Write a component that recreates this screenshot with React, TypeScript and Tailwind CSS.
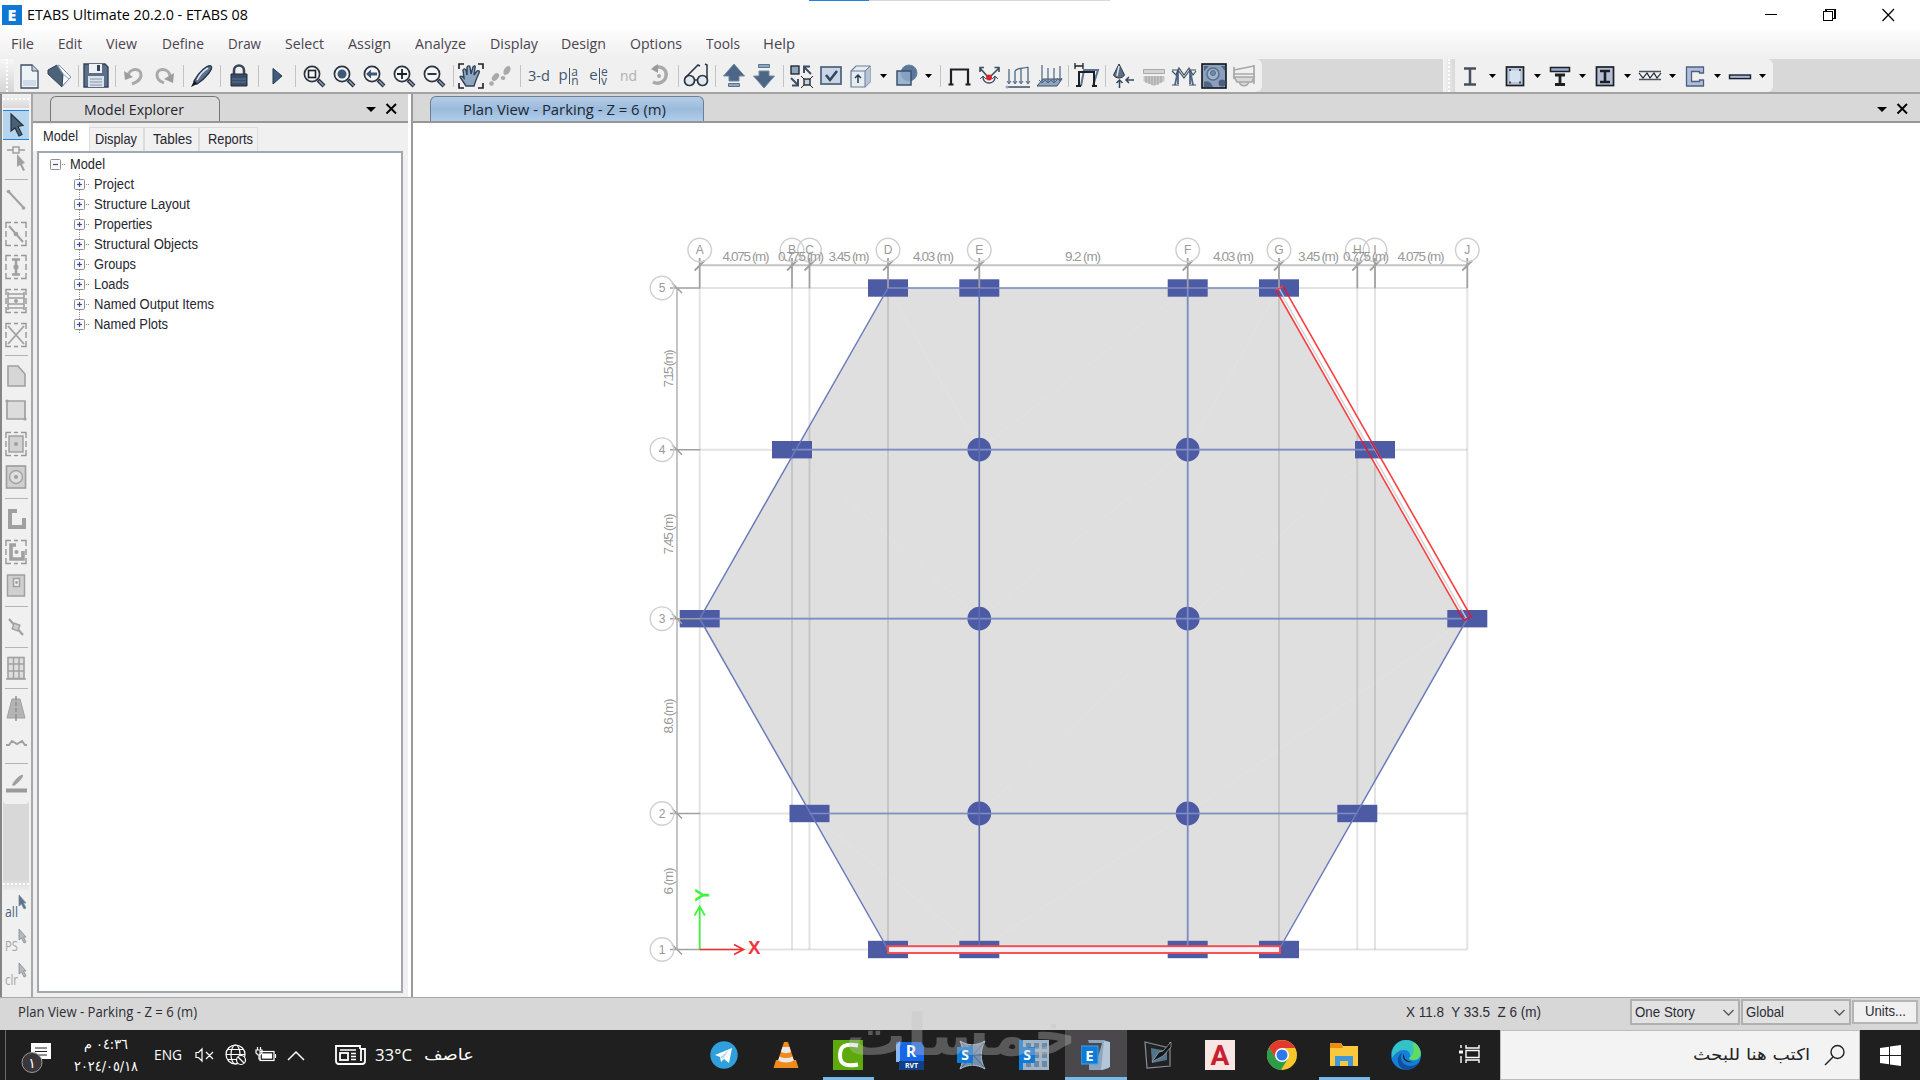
import { useLayoutEffect, useRef, useState, type ReactNode } from "react";

/* Squeezes or stretches a run of text so it occupies exactly `w` pixels. */
function Fit({ w, children, className = "" }: { w: number; children: ReactNode; className?: string }) {
  const ref = useRef<HTMLSpanElement>(null);
  const [k, setK] = useState(1);
  useLayoutEffect(() => {
    if (ref.current && ref.current.offsetWidth) setK(w / ref.current.getBoundingClientRect().width);
  }, [w]);
  return (
    <span className={`inline-block shrink-0 whitespace-nowrap ${className}`} style={{ width: w }}>
      <span ref={ref} dir="auto" className="inline-block origin-left" style={{ transform: `scaleX(${k})` }}>
        {children}
      </span>
    </span>
  );
}

function Ic({ children, s = 28 }: { children: ReactNode; s?: number }) {
  return (
    <svg width={s} height={s} viewBox="0 0 28 28" fill="none" className="shrink-0 overflow-visible">
      {children}
    </svg>
  );
}

const N = "#3d4f63";
const B = "#8fa6c0";
const G = "#a9a9a9";
const K = "#1c1f24";

function Cell({ children }: { children: ReactNode }) {
  return <div className="flex h-full w-[30px] shrink-0 items-center justify-center">{children}</div>;
}
function Sep() {
  return (
    <div className="flex h-full w-[7.5px] shrink-0 items-center justify-center pl-[2px]">
      <div className="h-[22px] w-px bg-[#c4c4c4]" />
    </div>
  );
}
function Drop() {
  return (
    <div className="flex h-full w-[15px] shrink-0 items-center justify-center">
      <svg width="7" height="4" viewBox="0 0 7 4">
        <path d="M0 0h7L3.500 4z" fill="#000" />
      </svg>
    </div>
  );
}

function Zoom({ children }: { children: ReactNode }) {
  return (
    <Ic>
      <path d="M18 18l6 6" stroke="#2b3440" strokeWidth="4" />
      <path d="M19 19l4.500 4.500" stroke={B} strokeWidth="1.400" />
      <circle cx="12" cy="12" r="7.600" fill="#f4f6f8" stroke="#2b3440" strokeWidth="1.700" />
      {children}
    </Ic>
  );
}

/* "p|an" and "e|ev": large letter, bar, then two small stacked letters. */
function Stacked({ a, t, b }: { a: string; t: string; b: string }) {
  return (
    <div className="flex items-center font-['Open_Sans'] text-[15px] font-medium text-[#42566c]">
      <span className="mb-[3px]">{a}</span>
      <span className="mx-[1px] h-[16px] w-[1.5px] bg-[#42566c]" />
      <span className="flex flex-col text-[12px] leading-[9px]">
        <span>{t}</span>
        <span>{b}</span>
      </span>
    </div>
  );
}

const menus: [string, number, string][] = [
  ["File", 23, "ml-[11px]"],
  ["Edit", 24, "ml-[24px]"],
  ["View", 31, "ml-[24px]"],
  ["Define", 42, "ml-[25px]"],
  ["Draw", 33, "ml-[24px]"],
  ["Select", 39, "ml-[24px]"],
  ["Assign", 43, "ml-[24px]"],
  ["Analyze", 51, "ml-[24px]"],
  ["Display", 48, "ml-[24px]"],
  ["Design", 45, "ml-[23px]"],
  ["Options", 52, "ml-[24px]"],
  ["Tools", 34, "ml-[24px]"],
  ["Help", 32, "ml-[23px]"],
];

function Toolbar() {
  return (
    <div className="flex h-[33px] bg-[#d8d8d8]">
      <div className="flex h-full w-[1262px] items-center rounded-r-md bg-[#f0f0f0]">
        <div className="flex h-full w-[13.5px] justify-center bg-gradient-to-b from-[#f7f7f7] to-[#d6d6d6]">
          <div className="h-full w-0 border-l-2 border-dotted border-white" />
        </div>
        <Cell>
          <Ic>
            <path d="M6 3h11l6 6v17H6z" fill="#eef3f8" stroke={N} strokeWidth="1.300" />
            <path d="M8 18h13v6H8z" fill="#cfdbe8" />
            <path d="M17 3v6h6" fill="#c4d3e2" stroke={N} />
          </Ic>
        </Cell>
        <Cell>
          <Ic>
            <path d="M10 5l4-2 12 12-9 9z" fill="#f7fafc" stroke="#7f93a8" />
            <path d="M3 8l9-5 6 9-1 13L3 12z" fill="#4d6178" stroke="#314254" />
            <path d="M12 3l6 9 6 5-7 8" stroke={B} />
          </Ic>
        </Cell>
        <Sep />
        <Cell>
          <Ic>
            <path d="M2 2h21l3 3v20H2z" fill="#5a6f88" stroke="#33435a" strokeWidth="1.400" />
            <rect x="7" y="2" width="13" height="9" fill="#eef2f6" />
            <rect x="15" y="3" width="3" height="6" fill="#33435a" />
            <rect x="6" y="14" width="16" height="11" fill="#d9e1ea" />
            <path d="M8 17h12M8 20h12M8 23h12" stroke="#8496aa" />
          </Ic>
        </Cell>
        <Sep />
        <Cell>
          <Ic>
            <path d="M8 14c1-8 13-9 13-1 0 5-4 7-9 9" stroke={G} strokeWidth="3" />
            <path d="M4 9l1 9 8-3z" fill="#9c9c9c" />
          </Ic>
        </Cell>
        <Cell>
          <Ic>
            <path d="M20 14c-1-8-13-9-13-1 0 5 3 6 7 8" stroke={G} strokeWidth="3" />
            <path d="M24 11l-1 10-9-4z" fill="#9c9c9c" />
          </Ic>
        </Cell>
        <Sep />
        <Cell>
          <Ic>
            <path d="M7 19C12 10 21 2 24 4s-5 12-14 18z" fill="#5a7190" stroke="#29384a" strokeWidth="1.500" />
            <path d="M21 6c-5 3-9 8-11 12" stroke="#dbe5ef" strokeWidth="1.500" />
            <path d="M4 25l3-6 3 3z" fill="#111" />
          </Ic>
        </Cell>
        <Sep />
        <Cell>
          <Ic>
            <path d="M9 13V8.500a5 5 0 0 1 10 0V13" stroke="#3c4654" strokeWidth="2.600" />
            <path d="M6 12h16v12H6z" fill="#3a4d66" stroke="#1f2a3a" />
            <path d="M7 17h14M7 20h14" stroke="#5d7596" />
          </Ic>
        </Cell>
        <Sep />
        <Cell>
          <Ic>
            <path d="M11 6.500l9 7.500-9 8z" fill="#3f5d80" stroke="#24364a" />
          </Ic>
        </Cell>
        <Sep />
        <Cell>
          <Zoom>
            <rect x="8.500" y="8.500" width="7" height="7" stroke={K} strokeWidth="1.600" />
          </Zoom>
        </Cell>
        <Cell>
          <Zoom>
            <circle cx="12" cy="12" r="4.500" fill="#3e5877" />
          </Zoom>
        </Cell>
        <Cell>
          <Zoom>
            <path d="M6 12l5-4.500v3h6v3h-6v3z" fill="#3e5877" />
          </Zoom>
        </Cell>
        <Cell>
          <Zoom>
            <path d="M7 12h10M12 7v10" stroke={K} strokeWidth="1.800" />
          </Zoom>
        </Cell>
        <Cell>
          <Zoom>
            <path d="M7.500 12h9" stroke={K} strokeWidth="1.800" />
          </Zoom>
        </Cell>
        <Sep />
        <Cell>
          <Ic>
            <path d="M2 7V2h5M21 2h5v5M26 21v5h-5M7 26H2v-5" stroke={K} strokeWidth="1.600" />
            <path
              d="M9 24l-6-9c1-2 3 0 4 1L6 8c1-2 2-1 3 0l1 5V5c1-2 3-1 3 0l1 7 2-7c1-2 3-1 2 1l-1 7 3-4c2-1 3 0 2 2l-3 7-2 6z"
              fill={B}
              stroke="#2f4258"
              strokeWidth="1.400"
            />
          </Ic>
        </Cell>
        <Cell>
          <Ic>
            <g fill={G}>
              <ellipse cx="20" cy="8.500" rx="3" ry="5" transform="rotate(30 20 8.500)" />
              <ellipse cx="16" cy="16" rx="2.300" ry="2" />
              <ellipse cx="8.500" cy="15" rx="2.800" ry="4.500" transform="rotate(40 8.500 15)" />
              <circle cx="4.500" cy="21.500" r="2.300" />
            </g>
          </Ic>
        </Cell>
        <Sep />
        <Cell>
          <Fit w={22} className="font-['Open_Sans'] text-[15px] font-medium text-[#42566c]">3-d</Fit>
        </Cell>
        <Cell>
          <Stacked a="p" t="a" b="n" />
        </Cell>
        <Cell>
          <Stacked a="e" t="e" b="v" />
        </Cell>
        <Cell>
          <Fit w={17} className="font-['Open_Sans'] text-[15px] text-[#b0b0b0]">nd</Fit>
        </Cell>
        <Cell>
          <Ic>
            <path d="M9 6c8-3 13 2 12 8s-8 9-13 6" stroke={G} strokeWidth="3.400" />
            <path d="M13 2v9L6 7z" fill="#9a9a9a" />
            <circle cx="14" cy="14" r="2" fill={G} />
          </Ic>
        </Cell>
        <Sep />
        <Cell>
          <Ic>
            <circle cx="7.500" cy="18.500" r="5" fill="#e2e9f1" stroke="#2a3542" strokeWidth="1.700" />
            <circle cx="20.500" cy="18.500" r="5" fill="#e2e9f1" stroke="#2a3542" strokeWidth="1.700" />
            <path d="M12 18h4M3 16L16 3l2 1M25 16V3l-2-1" stroke="#2a3542" strokeWidth="1.500" />
          </Ic>
        </Cell>
        <Sep />
        <Cell>
          <Ic>
            <path d="M14 2l10.500 12H19v5H9v-5H3.500z" fill="#4b6785" stroke="#71899f" />
            <path d="M8.500 21.500h11v3h-11z" fill={B} stroke="#5b7590" />
          </Ic>
        </Cell>
        <Cell>
          <Ic>
            <path d="M14 26L3.500 14H9V9h10v5h5.500z" fill="#4b6785" stroke="#71899f" />
            <path d="M8.500 2.500h11v3h-11z" fill={B} stroke="#5b7590" />
          </Ic>
        </Cell>
        <Sep />
        <Cell>
          <Ic>
            <rect x="4" y="4" width="8" height="8" fill={B} stroke={K} strokeWidth="1.300" />
            <path d="M24 12l-7-7m0 6V4.500h6" stroke={N} strokeWidth="2" />
            <path d="M4 16l7 7m0-6v6.500H5" stroke={N} strokeWidth="2" />
            <rect x="17" y="17" width="6" height="6" fill="#c6d2df" stroke={K} strokeWidth="1.300" />
            <path d="M14 14l3 3M26 14l-3 3M14 26l3-3M26 26l-3-3" stroke={K} />
          </Ic>
        </Cell>
        <Cell>
          <Ic>
            <rect x="4" y="5" width="20" height="17" fill="#c8d6e6" stroke="#53687f" strokeWidth="1.800" />
            <path d="M9 13l4 5 7-9" stroke="#33475e" strokeWidth="2.600" />
          </Ic>
        </Cell>
        <Cell>
          <Ic>
            <path d="M4 9l5-5h14v16l-5 5H4z" fill="#e6ecf3" stroke="#6c7f94" strokeWidth="1.200" />
            <path d="M18 9l5-5v16l-5 5z" fill="#b6c5d5" />
            <path d="M4 9h14v16M18 9l5-5" stroke="#6c7f94" />
            <path d="M11 21v-8m-3 3l3-3 3 3" stroke="#2b3b4e" strokeWidth="1.500" />
          </Ic>
        </Cell>
        <Drop />
        <Cell>
          <Ic>
            <circle cx="17" cy="11" r="8" fill="#5b779b" stroke="#6c86a6" />
            <rect x="5" y="9" width="14" height="14" fill="#8ea9c7" fillOpacity=".85" stroke="#3a5270" strokeWidth="1.500" />
          </Ic>
        </Cell>
        <Drop />
        <Sep />
        <Cell>
          <Ic>
            <path d="M6 22V7.500h17V22" stroke={K} strokeWidth="2.200" />
            <path d="M3.500 22.500h5M20.500 22.500h5" stroke={K} strokeWidth="2" />
          </Ic>
        </Cell>
        <Cell>
          <Ic>
            <path d="M12 14L5 6m0 4V5.500h4M16 14l8-8m-4.500-.5H24V10" stroke={N} strokeWidth="1.600" />
            <path d="M8 15c0 8 12 8 12 0" stroke={N} strokeWidth="1.500" />
            <path d="M5 17l3-3 3 3M17 17l3-3 3 3" stroke={N} />
            <circle cx="14" cy="15.500" r="3" fill="#d4242c" />
          </Ic>
        </Cell>
        <Cell>
          <Ic>
            <path d="M4 7v14M10 9v12M16 6v15M23 5v16M10 9c3-4 8-2 13-4" stroke="#4d6785" strokeWidth="1.300" />
            <path d="M2 19l2 3 2-3M8 19l2 3 2-3M14 19l2 3 2-3M21 19l2 3 2-3" stroke="#4d6785" />
            <path d="M2 25h23" stroke={N} strokeWidth="1.500" />
            <circle cx="2" cy="25" r="1.500" fill={B} />
          </Ic>
        </Cell>
        <Cell>
          <Ic>
            <path d="M2 24l6-7h19l-5 7z" fill={B} stroke={N} />
            <path d="M7 3v17M13 6v14M19 6v14M25 4v14" stroke="#4d6785" strokeWidth="1.200" />
            <path d="M4 18l3 3 3-3M10 18l3 3 3-3M16 18l3 3 3-3M22 16l3 3 2-3" stroke="#4d6785" />
          </Ic>
        </Cell>
        <Sep />
        <Cell>
          <Ic>
            <path d="M9 24L12 8h14l-5 16" stroke="#5a7695" strokeWidth="2" />
            <path d="M7 24V10h15v14M4 24h5M20 24h5" stroke={K} strokeWidth="2" />
            <path d="M3 1v6M11 1v6M3 4h8" stroke={K} strokeWidth="1.300" />
          </Ic>
        </Cell>
        <Sep />
        <Cell>
          <Ic>
            <path d="M9 2L3.500 13c2 4 9 4 11 0z" fill="#5c6f84" stroke="#28333f" />
            <path d="M9 4l-2 10" stroke="#dce4ec" strokeWidth="1.500" />
            <path d="M9.500 26v-8m-3 3l3-3 3 3M24 18h-8m3-3l-3 3 3 3" stroke="#33475e" strokeWidth="1.500" />
          </Ic>
        </Cell>
        <Cell>
          <Ic>
            <path d="M3.500 7.500h21v4h-21z" fill="#d4d4d4" stroke={G} />
            <path d="M3.500 14h21v5L14 24 3.500 19z" fill="#c6c6c6" />
            <path d="M6 14v7M9 14v8M12 14v9M15 14v9M18 14v9M21 14v7" stroke="#a2a2a2" />
          </Ic>
        </Cell>
        <Cell>
          <Ic>
            <path d="M5 23l3-15M20 8l3 15M8 22V9M20 22V9" stroke="#4d6785" strokeWidth="1.800" />
            <path d="M2 8h6l6 8 6-8h6M2 9l4 4 3-7 5 7 5-7 4 7 3-4M2 23h7M19 23h7" stroke={N} strokeWidth="1.200" />
          </Ic>
        </Cell>
        <Cell>
          <Ic>
            <rect x="2" y="2" width="24" height="24" fill="#8aa0bc" stroke="#10141a" strokeWidth="1.600" />
            <circle cx="13" cy="12" r="6" fill="#9fb3ca" stroke="#566f8e" strokeWidth="1.500" />
            <circle cx="13" cy="11" r="2.500" fill="#7189a6" stroke="#566f8e" />
            <circle cx="22" cy="21" r="3.500" fill="#4b607b" />
            <path d="M4 4h5L4 9zM21 4h4v5zM4 20c4-2 7 0 9 5H4z" fill="#4f6580" />
          </Ic>
        </Cell>
        <Cell>
          <Ic>
            <path d="M4 5v12M24 3v19M4 8l20-4M3 12h22M4 15h20l-2 5H7zM9 20c2 5 8 5 10 0" stroke="#a8a8a8" strokeWidth="1.700" fill="#d8d8d8" />
          </Ic>
        </Cell>
      </div>
      <div className="ml-[181px] flex h-full w-[330px] items-center rounded-r-md bg-[#f0f0f0]">
        <div className="flex h-full w-[12px] justify-center bg-gradient-to-r from-[#f4f4f4] to-[#d8d8d8]">
          <div className="h-full border-l-2 border-dotted border-white" />
        </div>
        <Cell>
          <Ic>
            <path d="M8 6.500h12M8 22.500h12M14 6v16" stroke="#45505d" strokeWidth="2.500" />
          </Ic>
        </Cell>
        <Drop />
        <Cell>
          <Ic>
            <rect x="5.500" y="5" width="17" height="18.500" fill="#b9c6da" stroke={K} strokeWidth="1.700" />
            <rect x="9" y="8.500" width="10" height="11.500" fill="#d5e1ee" />
            <path d="M8 8h2M18 8h2M8 20.500h2M18 20.500h2" stroke={N} strokeWidth="2" />
          </Ic>
        </Cell>
        <Drop />
        <Cell>
          <Ic>
            <rect x="4.500" y="5.500" width="19" height="4" fill="#9cabd0" stroke={K} strokeWidth="1.500" />
            <path d="M9 13h10M9 22.500h10M14 12v10" stroke={K} strokeWidth="2.800" />
          </Ic>
        </Cell>
        <Drop />
        <Cell>
          <Ic>
            <rect x="5.500" y="5" width="17" height="18.500" fill="#b4bfd6" stroke={K} strokeWidth="1.700" />
            <path d="M9 9h10M9 20h10M14 9v11" stroke={K} strokeWidth="2.600" />
          </Ic>
        </Cell>
        <Drop />
        <Cell>
          <Ic>
            <path d="M3 9.500h22M3 17.500h22" stroke="#4a5468" strokeWidth="1.600" />
            <path d="M3 11l4 5 4-5 3 5 4-5 3 5 4-5" stroke={K} strokeWidth="1.200" />
          </Ic>
        </Cell>
        <Drop />
        <Cell>
          <Ic>
            <path d="M5.500 5h17v6h-4V9.500h-8v10h8V18h4v6h-17z" fill="#b2bddb" stroke="#4c6180" strokeWidth="1.300" />
          </Ic>
        </Cell>
        <Drop />
        <Cell>
          <Ic>
            <rect x="3.500" y="13" width="21" height="3.600" fill="#a6b3da" stroke={K} strokeWidth="1.400" />
          </Ic>
        </Cell>
        <Drop />
      </div>
    </div>
  );
}

function VCell({ children, on = false }: { children: ReactNode; on?: boolean }) {
  return (
    <div className="flex h-[33.8px] w-full shrink-0 items-center justify-center">
      {on ? (
        <div className="flex h-[30px] w-full items-center justify-center border-y border-[#1f83dc] bg-[#b5d5ee]">{children}</div>
      ) : (
        children
      )}
    </div>
  );
}
function VSep() {
  return (
    <div className="flex h-[7.3px] w-full shrink-0 items-center justify-center">
      <div className="h-px w-[23px] bg-[#b5b5b5]" />
    </div>
  );
}
const dashBox = (
  <path d="M4 8V2.500h5M12 2.500h4M19 2.500h5V8M24 11v6M24 20v5.500h-5M16 25.500h-4M9 25.500H4V20M4 17v-6" stroke="#979797" strokeWidth="1.400" />
);

function SideTools() {
  const g = "#a0a0a0";
  return (
    <div className="flex w-[31px] shrink-0 flex-col border-l-2 border-[#858585] bg-[#f0f0f0] pr-[2px] pl-[1px]">
      <div className="flex h-full flex-col bg-[#d8d8d8]">
        <div className="flex h-[710px] shrink-0 flex-col rounded-b bg-[#f0f0f0]">
          <div className="h-[14px] shrink-0 bg-gradient-to-b from-[#f2f2f2] to-[#d9d9d9] pt-[4px]">
            <div className="border-t-2 border-dotted border-white" />
          </div>
          <VCell on>
            <Ic>
              <path d="M9 3v17l4-3 4 8 3-1.500-4-8 5-1z" fill="#4a5f78" stroke="#26333f" strokeWidth="1.200" />
            </Ic>
          </VCell>
          <VCell>
            <Ic>
              <path d="M5 5h18" stroke={g} strokeWidth="1.600" />
              <rect x="11" y="2" width="6" height="6" fill="#f0f0f0" stroke={g} strokeWidth="1.500" />
              <path d="M15 9v13l3-2 3 6 2-1-3-6 3-1z" fill={g} />
            </Ic>
          </VCell>
          <VSep />
          <VCell>
            <Ic>
              <path d="M7 6l14 15" stroke={g} strokeWidth="2" />
              <circle cx="6.500" cy="5.500" r="1.800" fill={g} />
              <circle cx="21.500" cy="22" r="1.800" fill={g} />
            </Ic>
          </VCell>
          <VCell>
            <Ic>
              {dashBox}
              <path d="M7 6l14 16" stroke={g} strokeWidth="2" />
              <circle cx="14" cy="14" r="2.300" fill={g} />
            </Ic>
          </VCell>
          <VCell>
            <Ic>
              {dashBox}
              <path d="M10 6.500h8M10 21.500h8M14 6v15" stroke={g} strokeWidth="2.500" />
              <circle cx="14" cy="14" r="2.600" fill={g} />
            </Ic>
          </VCell>
          <VCell>
            <Ic>
              {dashBox}
              <path d="M6 5v18M22 5v18M6 7h16M6 11h16M6 17h16M6 21h16" stroke={g} strokeWidth="1.600" />
              <circle cx="14" cy="14" r="2" fill={g} />
            </Ic>
          </VCell>
          <VCell>
            <Ic>
              {dashBox}
              <path d="M6 5l16 18M22 5L6 23" stroke={g} strokeWidth="1.800" />
            </Ic>
          </VCell>
          <VSep />
          <VCell>
            <Ic>
              <path d="M6 4h10l7 8v12H6z" fill="#d6d6d6" stroke={g} strokeWidth="1.600" />
            </Ic>
          </VCell>
          <VCell>
            <Ic>
              <path d="M5 5h18v18H5z" fill="#dcdcdc" stroke={g} strokeWidth="1.700" />
              <circle cx="5" cy="5" r="1.600" fill={g} />
              <circle cx="23" cy="23" r="1.600" fill={g} />
            </Ic>
          </VCell>
          <VCell>
            <Ic>
              {dashBox}
              <rect x="7" y="6" width="14" height="16" fill="#d2d2d2" stroke={g} strokeWidth="1.500" />
              <circle cx="14" cy="14" r="2" fill={g} />
            </Ic>
          </VCell>
          <VCell>
            <Ic>
              <rect x="4.500" y="3" width="19" height="22" fill="#cfcfcf" stroke={g} strokeWidth="1.700" />
              <circle cx="14" cy="14" r="6.500" fill="#dedede" stroke={g} strokeWidth="1.400" />
              <circle cx="14" cy="14" r="2" fill={g} />
            </Ic>
          </VCell>
          <VSep />
          <VCell>
            <Ic>
              <path d="M15 6H8v16h14v-9" stroke={g} strokeWidth="4" />
            </Ic>
          </VCell>
          <VCell>
            <Ic>
              {dashBox}
              <path d="M14 7H9v14h12v-8" stroke={g} strokeWidth="3.600" />
              <circle cx="14.500" cy="14" r="2" fill={g} />
            </Ic>
          </VCell>
          <VCell>
            <Ic>
              <rect x="5.500" y="3" width="17" height="21" fill="#cfcfcf" stroke={g} strokeWidth="1.500" />
              <rect x="11.500" y="6.500" width="6" height="8" fill="#eee" stroke={g} strokeWidth="1.500" />
              <circle cx="14.500" cy="10.500" r="1.400" fill={g} />
            </Ic>
          </VCell>
          <VSep />
          <VCell>
            <Ic>
              <path d="M7 6l14 16" stroke={g} strokeWidth="2.200" />
              <rect x="11" y="11" width="6" height="6" transform="rotate(20 14 14)" fill="#ccc" stroke={g} strokeWidth="1.400" />
            </Ic>
          </VCell>
          <VSep />
          <VCell>
            <Ic>
              <rect x="6" y="3.500" width="16" height="21" fill="#dedede" stroke={g} strokeWidth="1.600" />
              <path d="M11.500 3v21M17 3v21M6 10h16M6 17h16M4 25h20" stroke={g} strokeWidth="1.400" />
            </Ic>
          </VCell>
          <VSep />
          <VCell>
            <Ic>
              <path d="M10 4h8l5 19H5z" fill="#b4b4b4" stroke={g} />
              <path d="M14 1v4M14 7v4M14 13v4M14 19v7" stroke="#8c8c8c" strokeWidth="1.400" />
            </Ic>
          </VCell>
          <VCell>
            <Ic>
              <path d="M4 16h3l3-4 5 3 5-3 3 4h2" stroke={g} strokeWidth="2" />
            </Ic>
          </VCell>
          <VSep />
          <VCell>
            <Ic>
              <path d="M10 15c3-6 9-11 11-10 1 2-5 8-9 11z" fill={g} />
              <path d="M4 20.500h21" stroke="#9a9a9a" strokeWidth="4" />
            </Ic>
          </VCell>
        </div>
        <div className="grow" />
        <div className="flex h-[117px] shrink-0 flex-col bg-[#f0f0f0] font-['Open_Sans'] text-[14px] leading-[14px]">
          <div className="h-[10px] shrink-0 bg-gradient-to-b from-[#d9d9d9] to-[#ececec] pt-[3px]">
            <div className="border-t-2 border-dotted border-white" />
          </div>
          {[
            ["all", "text-[#4e6480]", "#5b7490"],
            ["PS", "text-[#a5a5a5]", "#b9b9b9"],
            ["clr", "text-[#a5a5a5]", "#b9b9b9"],
          ].map(([t, c, f]) => (
            <div key={t} className="flex h-[34px] w-full shrink-0 items-end pb-[5px] pl-[2px]">
              <Fit w={13} className={c}>{t}</Fit>
              <svg width="9" height="15" viewBox="0 0 9 15" className="mb-[9px]">
                <path d="M1 0v11l2.500-2L6 14l2-1-2.500-5H8z" fill={f} stroke="#7d8a98" strokeWidth=".8" />
              </svg>
            </div>
          ))}
        </div>
      </div>
    </div>
  );
}

const tree: [string, number][] = [
  ["Project", 40],
  ["Structure Layout", 96],
  ["Properties", 58],
  ["Structural Objects", 104],
  ["Groups", 42],
  ["Loads", 35],
  ["Named Output Items", 120],
  ["Named Plots", 74],
];

function Box({ plus = false }: { plus?: boolean }) {
  return (
    <svg width="18" height="20" viewBox="0 0 18 20" className="shrink-0">
      {plus && <path d="M5.500 0v20" stroke="#8a8a8a" strokeDasharray="1 1" />}
      <rect x=".5" y="5.500" width="10" height="10" rx="1" fill="#fafafa" stroke="#8f8f8f" />
      <path d="M3 10.500h5" stroke="#3b4ea0" strokeWidth="1.200" />
      {plus && <path d="M5.500 8v5" stroke="#3b4ea0" strokeWidth="1.200" />}
      <path d="M12 10.500h4" stroke="#8a8a8a" strokeDasharray="1 1" />
    </svg>
  );
}

function PaneButtons() {
  return (
    <svg width="32" height="12" viewBox="0 0 32 12">
      <path d="M0 4h10L5 9z" fill="#000" />
      <path d="M20.500 1l9.500 9.500M30 1l-9.500 9.500" stroke="#000" strokeWidth="1.900" />
    </svg>
  );
}

function Explorer() {
  const tab = "flex items-center border border-[#dcdcdc] border-b-0 bg-[#f1f1f1] text-[#26262e]";
  return (
    <div className="flex w-[377px] shrink-0 flex-col border-l-2 border-[#a8a8a8] bg-[#f0f0f0] font-['Liberation_Sans'] text-[14px]">
      <div className="flex h-[29px] items-end justify-between border-b-2 border-[#979797] bg-[#d8d8d8] pr-[10px]">
        <div className="ml-[17px] flex h-[25px] w-[170px] items-center rounded-t-md border border-b-0 border-[#777] bg-[#dcdcdc] pl-[33px] font-['Open_Sans'] text-[15px] font-medium text-[#26262e]">
          <Fit w={100}>Model Explorer</Fit>
        </div>
        <div className="pb-[6px]">
          <PaneButtons />
        </div>
      </div>
      <div className="flex h-[28px] shrink-0 items-end">
        <div className="flex h-[27px] w-[56px] items-center bg-white pb-[3px] pl-[10px] text-[#26262e]">
          <Fit w={35}>Model</Fit>
        </div>
        <div className={`${tab} h-[24px] w-[55px] pl-[5px]`}>
          <Fit w={42}>Display</Fit>
        </div>
        <div className={`${tab} h-[24px] w-[55px] pl-[8px]`}>
          <Fit w={39}>Tables</Fit>
        </div>
        <div className={`${tab} h-[24px] w-[59px] pl-[8px]`}>
          <Fit w={45}>Reports</Fit>
        </div>
      </div>
      <div className="mr-[5px] ml-[4px] h-[842px] border-2 border-[#a3a8b0] bg-white pt-[1px] text-[#26262e]">
        <div className="flex h-[20px] items-center pl-[11px]">
          <Box />
          <Fit w={35} className="ml-[2px]">Model</Fit>
        </div>
        {tree.map(([t, w]) => (
          <div key={t} className="flex h-[20px] items-center pl-[35px]">
            <Box plus />
            <Fit w={w} className="ml-[2px]">{t}</Fit>
          </div>
        ))}
      </div>
    </div>
  );
}

const gx: Record<string, number> = { A: 699.7, B: 792, C: 809.5, D: 888, E: 979.3, F: 1187.7, G: 1279, H: 1357.3, I: 1375, J: 1467.3 };
const gy: Record<string, number> = { "5": 288, "4": 449.7, "3": 618.7, "2": 813.5, "1": 949.5 };
const rectCols = ["D5", "E5", "F5", "G5", "B4", "I4", "A3", "J3", "C2", "H2", "D1", "E1", "F1", "G1"];
const roundCols = ["E4", "F4", "E3", "F3", "E2", "F2"];
const dimsX: [string, number, number][] = [
  ["4.075 (m)", 746, 47],
  ["0.775 (m)", 801, 46],
  ["3.45 (m)", 849, 41],
  ["4.03 (m)", 933.5, 41],
  ["9.2 (m)", 1083, 36],
  ["4.03 (m)", 1233.5, 41],
  ["3.45 (m)", 1318.5, 41],
  ["0.775 (m)", 1366, 46],
  ["4.075 (m)", 1421, 47],
];
const dimsY: [string, number, number][] = [
  ["7.15 (m)", 368.5, 38],
  ["7.45 (m)", 534, 41],
  ["8.6 (m)", 716, 35],
  ["6 (m)", 881, 27],
];

function Plan() {
  const blue = "#4c5ba4";
  return (
    <svg width="1506" height="874" viewBox="413 123 1506 874" className="block" fontFamily="Liberation Sans, sans-serif">
      <polygon points="888,288 1279,288 1467.300,618.700 1279,949.500 888,949.500 699.700,618.700" fill="#dfdfdf" />
      <path
        d="M888 288L979.300 449.700L1187.700 288M1279 288L1187.700 449.700L979.300 618.700M1375 449.700L1187.700 618.700L979.300 813.300M1467 618.700L1187.700 813.300L979.300 949.300M809.500 813.300L979.300 949.300M792 449.700L979.300 618.700"
        fill="none"
        stroke="#e6e6e6"
        strokeWidth=".7"
        opacity=".7"
      />
      <g stroke="#000" strokeOpacity=".11" strokeWidth="2">
        {Object.values(gx).map((x) => (
          <path key={x} d={`M${x} 288V949.500`} />
        ))}
        {Object.values(gy).map((y) => (
          <path key={y} d={`M699.700 ${y}H1467.300`} />
        ))}
      </g>
      <path d="M1276 290.200l7-3.900L1471 616.500l-7 4z" fill="#fff" />
      <path d="M1278.500 289L1466.500 619" stroke="#d6d6d6" strokeWidth="1.500" />
      <g fill={blue}>
        {rectCols.map((c) => (
          <rect key={c} x={gx[c[0]] - 20} y={gy[c[1]] - 8.7} width="40" height="17.400" />
        ))}
        {roundCols.map((c) => (
          <circle key={c} cx={gx[c[0]]} cy={gy[c[1]]} r="11.900" />
        ))}
      </g>
      <g stroke="#7f8dc6" strokeWidth="1.700" fill="none">
        <path d="M888 288H1279M792 449.700H1375M699.700 618.700H1467.300M809.500 813.500H1357.300M1187.700 288V949.500" />
        <path d="M888 288L699.700 618.700L888 949.500M1279 949.500L1467.300 618.700" stroke="#6c7bba" strokeWidth="1.500" />
        <path d="M979.300 288V949.500" stroke="#5f6eb2" strokeWidth="1.500" />
      </g>
      <path d="M1370 441L1380 458.400M1279 288l5 9M1461 609l5.500 9.500" stroke="#b9c0e0" strokeWidth="1.500" />
      <path d="M1276 290.200l7-3.900L1471 616.500l-7 4z" fill="none" stroke="#fa4044" strokeWidth="1.600" />
      <path d="M1361.900 441l10 17.400M1370.500 441l10 17.400M1276 290.200l3.500 6.300M1283 286.300l5.700 10M1457.500 610l6.500 10.500 7-4-3.500-6.400" fill="none" stroke="#b22450" strokeWidth="1.500" />
      <rect x="888" y="946.200" width="392" height="6.800" fill="#f4f2f7" stroke="#f84a4e" strokeWidth="1.900" />
      <g stroke="#a0a0a0">
        <path d="M699.700 265.300H1467.300M677 288V949.500" stroke="#c4c4c4" strokeWidth="2" />
        {Object.values(gx).map((x) => (
          <path key={x} d={`M${x} 258v30M${x - 5} 270.500l10-10`} strokeWidth="1.800" />
        ))}
        {Object.values(gy).map((y) => (
          <path key={y} d={`M670 ${y}h30M672 ${y - 5}l10 10`} strokeWidth="1.600" />
        ))}
      </g>
      <g fill="none" stroke="#cfcfcf" strokeWidth="1.400">
        {Object.values(gx).map((x) => (
          <circle key={x} cx={x} cy="250" r="11.800" />
        ))}
        {Object.values(gy).map((y) => (
          <circle key={y} cx="662" cy={y} r="11.800" />
        ))}
      </g>
      <g fill="#989898" fontSize="12" textAnchor="middle">
        {Object.entries(gx).map(([k, x]) => (
          <text key={k} x={x} y="254">{k}</text>
        ))}
        {Object.entries(gy).map(([k, y]) => (
          <text key={k} x="662" y={y + 4}>{k}</text>
        ))}
        {dimsX.map(([t, x, w]) => (
          <text key={x} x={x} y="260.500" fontSize="13.500" textLength={w} lengthAdjust="spacing">{t}</text>
        ))}
        {dimsY.map(([t, y, w]) => (
          <text key={y} transform={`translate(672.500 ${y}) rotate(-90)`} fontSize="13.500" textLength={w} lengthAdjust="spacing">{t}</text>
        ))}
      </g>
      <g fill="none" strokeWidth="1.700">
        <path d="M699.700 949.500V907M694.500 915.500l5.200-9 5.200 9" stroke="#3df53d" />
        <path d="M699.700 949.500H743M734 944.500l9.500 5-9.500 5" stroke="#ee3030" />
      </g>
      <text x="748" y="954" fontSize="18.500" fontWeight="bold" fill="#f2383c" textLength="12.500" lengthAdjust="spacingAndGlyphs">X</text>
      <text transform="translate(709 895.200) rotate(-90)" textAnchor="middle" fontSize="20" fontWeight="bold" fill="#3df53d">Y</text>
    </svg>
  );
}

function View() {
  return (
    <div className="ml-[3px] flex grow flex-col border-l-2 border-[#9a9a9a] bg-white">
      <div className="flex h-[29px] items-end justify-between border-b-2 border-[#979797] bg-[#d8d8d8] pr-[11px]">
        <div className="ml-[17px] flex h-[25px] w-[274px] items-center rounded-t-md border border-b-0 border-[#6e7f92] bg-gradient-to-b from-[#b5cde6] via-[#9bbbdb] to-[#b0cceb] pl-[32px] font-['Open_Sans'] text-[15px] font-medium text-[#1d2733]">
          <Fit w={203}>Plan View - Parking - Z = 6 (m)</Fit>
        </div>
        <div className="pb-[6px]">
          <PaneButtons />
        </div>
      </div>
      <Plan />
    </div>
  );
}

function Combo({ t, w }: { t: string; w: number }) {
  return (
    <div className="flex h-[26px] w-[110px] items-center justify-between border-2 border-[#b0b0b0] bg-[#e2e2e2] pt-px pr-[4px] pl-[3px]">
      <Fit w={w}>{t}</Fit>
      <svg width="11" height="7" viewBox="0 0 11 7" fill="none">
        <path d="M.5 1l5 5 5-5" stroke="#555" strokeWidth="1.300" />
      </svg>
    </div>
  );
}

function Pinned({ children, on = "", bar = "" }: { children?: ReactNode; on?: string; bar?: string }) {
  return (
    <div className={`flex h-full w-[62px] shrink-0 flex-col items-center justify-end ${on}`}>
      <div className="flex h-[47px] items-center">{children}</div>
      <div className={`h-[3px] ${bar}`} />
    </div>
  );
}

function S30({ children }: { children: ReactNode }) {
  return (
    <svg width="30" height="30" viewBox="0 0 30 30" fill="none" fontFamily="Open Sans, sans-serif" fontWeight="bold" className="mt-[2px]">
      {children}
    </svg>
  );
}

function Taskbar() {
  return (
    <div className="relative flex h-[50px] bg-[#1f1f1f] font-['Open_Sans'] text-white">
      <div className="flex h-full w-[693px] items-center">
        <div className="ml-[5px] h-full w-px bg-[#6a6a6a]" />
        <svg width="32" height="34" viewBox="0 0 32 34" className="mt-[3px] ml-[15px]">
          <path d="M10 3h20v16H21v5l-6-5h-5z" fill="#fff" />
          <path d="M14 8h12M14 11.500h12M14 15h12" stroke="#222" strokeWidth="1.200" />
          <circle cx="11" cy="22.500" r="10" fill="#3b3639" stroke="#9a9a9a" />
          <text x="11" y="28" textAnchor="middle" fontSize="14" fill="#fff" fontFamily="DejaVu Sans">١</text>
        </svg>
        <div className="ml-[21px] flex h-full w-[64px] flex-col items-center justify-center font-['DejaVu_Sans'] text-[14px] leading-[22px]">
          <Fit w={44}>
            <span dir="rtl">٠٤:٣٦ م</span>
          </Fit>
          <Fit w={64}>٢٠٢٤/٠٥/١٨</Fit>
        </div>
        <Fit w={28} className="ml-[16px] text-[14.5px]">ENG</Fit>
        <svg width="20" height="16" viewBox="0 0 20 16" fill="none" stroke="#fff" strokeWidth="1.200" className="ml-[13px]">
          <path d="M1 5.500h2.500L7 2v12l-3.500-3.500H1zM11 5l7 7M18 5l-7 7" />
        </svg>
        <svg width="22" height="22" viewBox="0 0 22 22" fill="none" stroke="#fff" strokeWidth="1.200" className="ml-[10px]">
          <circle cx="10.500" cy="10.500" r="9.500" />
          <ellipse cx="10.500" cy="10.500" rx="4.500" ry="9.500" />
          <path d="M1 10.500h19M2.500 5.500h16M2.500 15.500h12" />
          <circle cx="16" cy="16" r="4.500" fill="#1f1f1f" />
          <path d="M13 13l6 6" />
        </svg>
        <svg width="22" height="16" viewBox="0 0 22 16" fill="none" stroke="#fff" strokeWidth="1.200" className="ml-[8px]">
          <rect x="5" y="4.500" width="14" height="9" />
          <rect x="7.500" y="7" width="9" height="4" fill="#fff" />
          <path d="M20.500 7v4M1 3h6v3l-2 2H3L1 6zM2.500 3V0M5.500 3V0M4 8v4h2" />
        </svg>
        <svg width="18" height="11" viewBox="0 0 18 11" fill="none" stroke="#fff" strokeWidth="1.500" className="ml-[10px]">
          <path d="M1 10l8-8 8 8" />
        </svg>
        <svg width="31" height="20" viewBox="0 0 31 20" fill="none" stroke="#fff" strokeWidth="1.800" className="ml-[30px]">
          <path d="M25 4V1H1v15c0 2 1 3 3 3h23c2 0 3-1 3-3V4h-4v12" />
          <rect x="5" y="8" width="8" height="7" />
          <path d="M5 5h16M16 8.500h5M16 11.500h5M16 14.500h5" strokeWidth="1.500" />
        </svg>
        <Fit w={37} className="ml-[9px] text-[17px]">33°C</Fit>
        <Fit w={50} className="ml-[12px] font-['DejaVu_Sans'] text-[16px]">عاصف</Fit>
      </div>
      <Pinned>
        <S30>
          <circle cx="15" cy="15" r="13.700" fill="#2fa0dc" />
          <path d="M6 15l17-7-3 15-5-4-3 3-1-5z" fill="#fff" />
          <path d="M11 17l9-7-6 9z" fill="#b9dcf0" />
        </S30>
      </Pinned>
      <Pinned>
        <S30>
          <path d="M5 20h20l2.500 8H2.500z" fill="#f08a1c" />
          <path d="M13 2h4l6.500 20c-3 3-14 3-17 0z" fill="#f08a1c" />
          <path d="M11.500 7h7l1.600 5c-3 1.500-7 1.500-10.200 0zM8.500 16.500c4 2 9 2 13 0l1.300 4c-4 2.500-12 2.500-15.600 0z" fill="#e9e9e9" />
        </S30>
      </Pinned>
      <Pinned bar="w-[51px] bg-[#76b9ed]">
        <S30>
          <rect width="30" height="30" fill="#5eaa0c" />
          <path d="M25 5.500C12 3 7 6 7 15s5 12 18 9.500" stroke="#fff" strokeWidth="4" />
        </S30>
      </Pinned>
      <Pinned>
        <S30>
          <path d="M1 2h25l3 4v24H4v-8H1z" fill="#1667e8" />
          <path d="M1 5l4-4v21H1z" fill="#8bb7f7" />
          <path d="M4 21h25v9H4z" fill="#123f87" />
          <text x="16" y="17" textAnchor="middle" fontSize="16" fill="#fff">R</text>
          <text x="16.500" y="28" textAnchor="middle" fontSize="7" fill="#fff">RVT</text>
        </S30>
      </Pinned>
      <Pinned>
        <S30>
          <path d="M3 1c8 5 16 5 25 0-5 9-5 19 0 28-8-5-17-5-25 0 4-9 4-19 0-28z" fill="#7790ab" stroke="#a9bccd" />
          <path d="M15 4v22M6 15h19M5 3l22 24M27 3L5 27" stroke="#506a86" />
          <rect x="0" y="7" width="16" height="16" fill="#0f7bd8" />
          <text x="8" y="20" textAnchor="middle" fontSize="14" fill="#fff">S</text>
        </S30>
      </Pinned>
      <Pinned>
        <S30>
          <rect width="30" height="30" fill="#9fb5c9" />
          <path d="M7 3h5v6H7zM15 3h5v6h-5zM23 3h5v6h-5zM15 12h5v6h-5zM23 12h5v6h-5zM7 21h5v6H7zM15 21h5v6h-5zM23 21h5v6h-5z" fill="#6f89a3" />
          <path d="M0 0h4v30H0z" fill="#0f7bd8" />
          <rect x="0" y="7" width="16" height="16" fill="#0f7bd8" />
          <text x="8" y="20" textAnchor="middle" fontSize="14" fill="#fff">S</text>
        </S30>
      </Pinned>
      <Pinned on="bg-[#4a484a]" bar="w-[62px] bg-[#76b9ed]">
        <S30>
          <path d="M7 0h16l5 2v26l-6 2H8v-6h7l6-21H8z" fill="#8da6bd" />
          <path d="M23 1l6 1v25l-9 3z" fill="#b4c7d8" />
          <rect x="0" y="6" width="17" height="18" fill="#0f7bd8" stroke="#4aa2ea" />
          <text x="8.500" y="20.500" textAnchor="middle" fontSize="15" fill="#fff">E</text>
        </S30>
      </Pinned>
      <Pinned>
        <S30>
          <path d="M2 2l25 6 0-6 0 24L4 28z" fill="#202225" stroke="#8a8f94" strokeWidth="1.200" />
          <path d="M8 8l16 3v9L9 23z" fill="#53758c" />
          <path d="M9 22l7-10 4-1 8-9v5l-8 9z" fill="#151617" stroke="#a8b0b6" strokeWidth=".7" />
        </S30>
      </Pinned>
      <Pinned>
        <S30>
          <rect width="30" height="30" fill="#f8e6e4" />
          <text x="15" y="25" textAnchor="middle" fontSize="28" fill="#c8202e" fontFamily="Roboto">A</text>
        </S30>
      </Pinned>
      <Pinned>
        <S30>
          <circle cx="15" cy="15" r="15" fill="#f9c62b" />
          <path d="M2 7.500A15 15 0 0 0 14 30L21 18.500 9 18.500z" fill="#2c9c4b" />
          <path d="M2 7.500L9 18.500 15 8h13A15 15 0 0 0 2 7.500z" fill="#e23a2e" />
          <circle cx="15" cy="15" r="7" fill="#fff" />
          <circle cx="15" cy="15" r="5.500" fill="#2f78ea" />
        </S30>
      </Pinned>
      <Pinned bar="w-[51px] bg-[#76b9ed]">
        <S30>
          <path d="M1 3h11l2 3h15v20H1z" fill="#fbc73c" />
          <path d="M1 3h11l2 5H1z" fill="#ea8d13" />
          <path d="M6 26V16h18v10h-5v-5h-8v5z" fill="#3c97dc" />
        </S30>
      </Pinned>
      <Pinned>
        <S30>
          <circle cx="15" cy="15" r="15" fill="#1580d8" />
          <path d="M1 12C3 3 10 0 15 0c9 0 15 7 15 14 0 6-9 8-12 5 3-3 1-9-5-9-5 0-9 3-12 8z" fill="#35c1c8" />
          <path d="M24 3c8 7 7 16-1 17-3 0-5-1-5-2 5-3 6-9 3-14z" fill="#5fdc62" />
          <path d="M11 13c-3 5 0 12 7 13 4 0 7-1 9-3-3 5-8 7-12 7C6 28 4 17 11 13z" fill="#134d9e" />
          <path d="M13 13c-1 5 3 9 9 9-3 1-10 0-10-6z" fill="#1f1f1f" />
        </S30>
      </Pinned>
      <Pinned>
        <svg width="22" height="20" viewBox="0 0 22 20" fill="none" stroke="#fff" strokeWidth="1.400" className="ml-[4px]">
          <path d="M2 1v3M2 12v7M7 1v3h13V1M7 19v-3h13v3M7 6.500h13v7H7z" />
          <path d="M0 8h4" strokeWidth="3" />
        </svg>
      </Pinned>
      <div className="ml-[1px] flex h-full w-[360px] items-center justify-end border border-[#bdbdbd] bg-[#f3f3f3] pr-[13px] text-[#222]">
        <Fit w={117} className="font-['DejaVu_Sans'] text-[16px]">اكتب هنا للبحث</Fit>
        <svg width="22" height="22" viewBox="0 0 22 22" fill="none" stroke="#222" strokeWidth="1.400" className="ml-[14px]">
          <circle cx="13.500" cy="8" r="6.500" />
          <path d="M9 13l-8 8" />
        </svg>
      </div>
      <div className="flex h-full grow items-center justify-center">
        <svg width="21" height="21" viewBox="0 0 21 21" fill="#fff">
          <path d="M0 3l9-1.200V10H0zM10 1.600L21 0v10H10zM0 11h9v8.200L0 18zM10 11h11v10l-11-1.600z" />
        </svg>
      </div>
      <div className="pointer-events-none absolute -top-[21px] left-[845px] text-[#c4c4c4] opacity-35">
        <Fit w={232} className="font-['DejaVu_Sans'] text-[58px] leading-[52px] font-bold">خمسات</Fit>
      </div>
    </div>
  );
}

export default function App() {
  return (
    <div className="flex h-[1080px] w-[1920px] flex-col overflow-hidden bg-white">
      <div className="relative flex h-[29px] items-center justify-between bg-white pr-[25px]">
        <div className="absolute top-0 left-[809px] flex h-px w-[301px] bg-[#d9d9d9]">
          <div className="h-px w-[60px] bg-[#1f83dc]" />
        </div>
        <div className="flex items-center pl-[2px]">
          <div className="flex size-[20px] items-center justify-center bg-[#0f78d7] font-['Open_Sans'] text-[16px] leading-none font-extrabold text-white">E</div>
          <Fit w={221} className="ml-[5px] font-['Open_Sans'] text-[15px] text-black">ETABS Ultimate 20.2.0 - ETABS 08</Fit>
        </div>
        <svg width="130" height="14" viewBox="0 0 130 14" fill="none" stroke="#000" strokeWidth="1.200" shapeRendering="crispEdges">
          <path d="M0 6.500h12M58.500 3.500h9v9h-9zM61 3V1.500h9v9h-2" />
          <path d="M117.500 1l11.500 12M129 1l-11.500 12" shapeRendering="auto" />
        </svg>
      </div>
      <div className="flex h-[30px] items-center bg-gradient-to-b from-[#fdfdfd] to-[#efefef] pb-[2px] font-['Open_Sans'] text-[15px] text-[#4a4450]">
        {menus.map(([t, w, m]) => (
          <Fit key={t} w={w} className={m}>{t}</Fit>
        ))}
      </div>
      <Toolbar />
      <div className="h-[2px] shrink-0 bg-[#a3a3a3]" />
      <div className="flex h-[903px] shrink-0">
        <SideTools />
        <Explorer />
        <View />
      </div>
      <div className="flex h-[33px] shrink-0 items-center border-t border-[#a8a8a8] bg-[#d7d7d7] pr-[2px] font-['Liberation_Sans'] text-[14.5px] text-[#2c2c34]">
        <Fit w={179} className="mb-[5px] ml-[18px] font-['Open_Sans'] text-[14px]">Plan View - Parking - Z = 6 (m)</Fit>
        <Fit w={135} className="mb-[2px] ml-[1209px]">X 11.8&nbsp; Y 33.5&nbsp; Z 6 (m)</Fit>
        <div className="mb-[4px] ml-[89px] flex items-center">
          <Combo t="One Story" w={60} />
          <div className="ml-px">
            <Combo t="Global" w={38} />
          </div>
          <div className="ml-[1px] flex h-[24px] w-[66px] items-center justify-center border-2 border-[#b5b5b5] bg-[#f0f0f0]">
            <Fit w={41}>Units...</Fit>
          </div>
        </div>
      </div>
      <Taskbar />
    </div>
  );
}
